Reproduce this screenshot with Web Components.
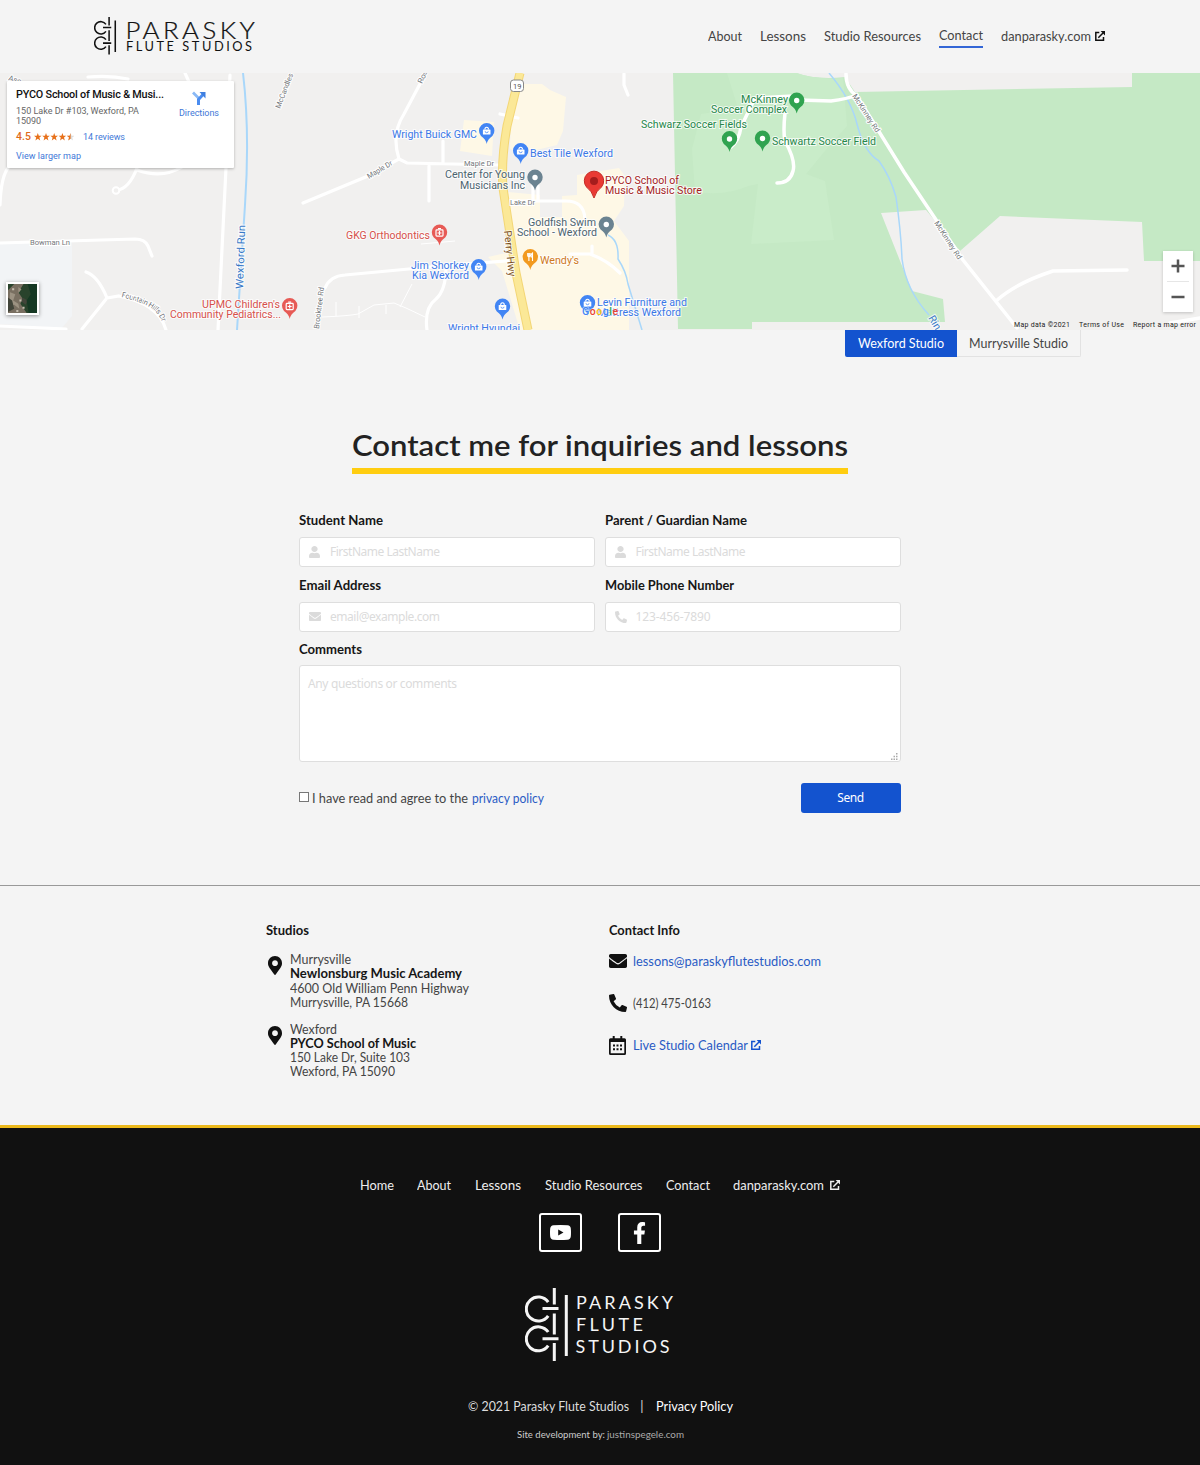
<!DOCTYPE html>
<html lang="en">
<head>
<meta charset="utf-8">
<title>Contact | Parasky Flute Studios</title>
<style>
html,body{margin:0;padding:0}
body{background:#f4f4f4;color:#444;font:400 13px/14px Lato,"Open Sans",sans-serif}
</style>
</head>
<body>
<contact-page></contact-page>
<script>
const define = (name, render, after) => customElements.define(name, class extends HTMLElement {
  connectedCallback() {
    if (this.shadowRoot) return;
    this.attachShadow({mode: 'open'}).innerHTML = render(this);
    if (after) after(this);
  }
});

/* Text run that fills a given measure, by letter spacing or, with "wide", by glyph width. */
define('fit-text', el => `<style>:host{display:inline-block;white-space:nowrap;width:${el.getAttribute('w')}px}span{display:inline-block;white-space:nowrap;transform-origin:0 50%}</style><span><slot></slot></span>`, el => {
  const s = el.shadowRoot.querySelector('span');
  const w = +el.getAttribute('w');
  const natural = s.getBoundingClientRect().width;
  if (el.hasAttribute('wide')) s.style.transform = `scaleX(${w / natural})`;
  else s.style.letterSpacing = (w - natural) / Math.max(el.textContent.trim().length - 1, 1) + 'px';
});

const ICONS = {
  user: ['0 0 448 512', '<path d="M224 256c70.7 0 128-57.3 128-128S294.7 0 224 0 96 57.3 96 128s57.3 128 128 128zm89.6 32h-16.7c-22.2 10.2-46.9 16-72.9 16s-50.6-5.8-72.9-16h-16.7C60.2 288 0 348.2 0 422.4V464c0 26.5 21.5 48 48 48h352c26.5 0 48-21.5 48-48v-41.6c0-74.2-60.2-134.4-134.4-134.4z"/>'],
  mail: ['0 64 512 384', '<path d="M502.3 190.8c3.9-3.1 9.7-.2 9.7 4.7V400c0 26.5-21.5 48-48 48H48c-26.5 0-48-21.5-48-48V195.6c0-5 5.7-7.8 9.7-4.7 22.4 17.4 52.1 39.5 154.1 113.6 21.1 15.4 56.7 47.8 92.2 47.6 35.7.3 72-32.8 92.3-47.6 102-74.1 131.6-96.3 154-113.7zM256 320c23.2.4 56.6-29.2 73.4-41.4 132.7-96.3 142.8-104.7 173.4-128.7 5.8-4.5 9.2-11.5 9.2-18.9v-19c0-26.5-21.5-48-48-48H48c-26.5 0-48 21.5-48 48v19c0 7.4 3.4 14.3 9.2 18.9 30.6 23.9 40.7 32.4 173.4 128.7 16.8 12.2 50.2 41.8 73.4 41.4z"/>'],
  phone: ['0 0 512 512', '<path d="M497.39 361.8l-112-48a24 24 0 0 0-28 6.9l-49.6 60.6A370.66 370.66 0 0 1 130.6 204.11l60.6-49.6a23.94 23.94 0 0 0 6.9-28l-48-112A24.16 24.16 0 0 0 122.6.61l-104 24A24 24 0 0 0 0 48c0 256.5 207.9 464 464 464a24 24 0 0 0 23.4-18.6l24-104a24.29 24.29 0 0 0-14.01-27.6z"/>'],
  marker: ['0 0 384 512', '<path d="M172.268 501.67C26.97 291.031 0 269.413 0 192 0 85.961 85.961 0 192 0s192 85.961 192 192c0 77.413-26.97 99.031-172.268 309.67-9.535 13.774-29.93 13.773-39.464 0zM192 272c44.183 0 80-35.817 80-80s-35.817-80-80-80-80 35.817-80 80 35.817 80 80 80z"/>'],
  calendar: ['0 0 17 19', '<path fill-rule="evenodd" d="M1.500 2.300h2.200V0h2v2.300h5.600V0h2v2.300h2.200A1.500 1.500 0 0 1 17 3.800V17.500a1.500 1.500 0 0 1-1.500 1.500h-14A1.500 1.500 0 0 1 0 17.500V3.800a1.500 1.500 0 0 1 1.500-1.500zM1.700 6v11.300h13.600V6zM4 8.500h2v2H4zm3.500 0h2v2h-2zm3.500 0h2v2h-2zM4 12.300h2v2H4zm3.500 0h2v2h-2zm3.500 0h2v2h-2z"/>'],
  link: ['0 0 10 10', '<path d="M4.300 1.500H.8v7.700h7.700V5.900M3.300 6.700 8 2" fill="none" stroke="currentColor" stroke-width="1.500"/><path d="M5.600 0H10v4.400z"/>'],
  youtube: ['0 0 21 15', '<path fill-rule="evenodd" d="M3.500.3Q10.500-.3 17.500.3 20.600.6 20.800 3.500q.4 4 0 8-.3 2.900-3.300 3.200-7 .6-14 0Q.500 14.400.2 11.500q-.4-4 0-8Q.5.6 3.500.3zM8.200 4.600v5.800l5.300-2.900z"/>'],
  facebook: ['0 0 320 512', '<path d="M279.140 288l14.220-92.660h-88.910v-60.130c0-25.350 12.420-50.060 52.240-50.060h40.420V6.260S260.430 0 225.360 0c-73.220 0-121.080 44.380-121.080 124.720v70.620H22.890V288h81.390v224h100.170V288z"/>']
};
define('ui-icon', el => {
  const [box, body] = ICONS[el.getAttribute('name')];
  return `<style>:host{display:inline-flex;flex:none}svg{display:block;width:${el.getAttribute('w')}px;height:${el.getAttribute('h')}px}</style><svg viewBox="${box}" preserveAspectRatio="none" fill="currentColor">${body}</svg>`;
});

const keys = `<g fill="none" stroke="currentColor" stroke-width="3"><path d="M23.200 14.200a12 12 0 1 0 0 13.600M23.200 44a12 12 0 1 0 0 13.600M17.500 20.500h16M17.500 50.700h16M29.300 0v16.500M29.300 25.500v21M29.300 55v18M41.300 7v61"/></g>`;
define('studio-logo', el => el.hasAttribute('stacked')
  ? `<style>:host{display:block}svg{display:block}text{font-family:Lato;font-size:18px}</style><svg width="150" height="74" viewBox="0 0 150 74" fill="currentColor">${keys}
     <text x="51" y="21" textLength="97">PARASKY</text><text x="51" y="43" textLength="67">FLUTE</text><text x="50.500" y="64.500" textLength="94">STUDIOS</text></svg>`
  : `<style>:host{display:block}svg{display:block}text{font-family:Lato}</style><svg width="162" height="38" viewBox="0 0 162 38" fill="currentColor"><g transform="scale(.515)">${keys}</g>
     <text transform="translate(31.500 21.500) scale(1.120 1)" font-size="23" font-weight="300" stroke="currentColor" stroke-width=".25" textLength="115.500">PARASKY</text><text x="32" y="34" font-size="12.800" textLength="126">FLUTE STUDIOS</text></svg>`);

define('site-nav', () => `<style>
:host{display:block;height:73px}
header{box-sizing:border-box;height:73px;padding:17px 95px 0 94px;display:flex;justify-content:space-between;color:#111}
nav{display:flex;gap:18px;padding-top:12px;height:20px;color:#444}
a{display:block}a.on{height:18px;margin-top:-1px;border-bottom:2px solid #3366d6}
a.ext{display:flex;gap:4px}ui-icon{padding-top:2px;color:#111}
</style><header><studio-logo></studio-logo><nav>
<a><fit-text wide w="34">About</fit-text></a><a><fit-text wide w="46">Lessons</fit-text></a><a><fit-text wide w="97">Studio Resources</fit-text></a><a class="on"><fit-text wide w="44">Contact</fit-text></a><a class="ext"><fit-text wide w="90">danparasky.com</fit-text><ui-icon name="link" w="10" h="10"></ui-icon></a></nav></header>`);

const COLORS = {b:'#3b78e7', r:'#d6504b', s:'#4d6470', g:'#26874a', o:'#cf7a1e', p:'#a51d24'};
const PINS = {b:'#4285f4', r:'#e75a55', s:'#6b8391', g:'#30a350', o:'#f29a1f'};
const glyph = {
  b:'<rect x="-3.800" y="-1.600" width="7.600" height="5.200" rx=".6" fill="#fff"/><path d="M-1.800-1.600a1.800 2.200 0 0 1 3.600 0" fill="none" stroke="#fff" stroke-width="1.100"/><path d="M-1.500.3a1.500 1.400 0 0 0 3 0" fill="none" stroke="#4285f4" stroke-width=".8"/>',
  r:'<rect x="-3.500" y="-2.600" width="7" height="6.200" rx=".8" fill="none" stroke="#fff" stroke-width="1.200"/><path d="M0-1.500v4M-2 .5h4M-1.500-3.800h3" stroke="#fff" stroke-width="1.200"/>',
  s:'<circle r="2.700" fill="#fff"/>', g:'<circle r="2.700" fill="#fff"/>',
  o:'<path d="M-2.600-4v2.500a1.200 1.200 0 0 0 2.400 0V-4M-1.400-4v8M2.200 4v-8q-1.700 1-1.300 4h1.300" fill="none" stroke="#fff" stroke-width="1.100"/>'
};
const pin = (c, x, y) => `<g transform="translate(${x} ${y})"><path d="M0 13Q-1 8-5.700 5A7.700 7.700 0 1 1 5.700 5Q1 8 0 13z" fill="${PINS[c]}"/>${glyph[c]}</g>`;
const lab = (c, x, y, w, t) => `<text class="l" x="${x}" y="${y}" textLength="${w}" lengthAdjust="spacingAndGlyphs" fill="${COLORS[c]}">${t}</text>`;
const road = (x, y, a, w, t) => `<text class="r" transform="translate(${x} ${y}) rotate(${a})" textLength="${w}" lengthAdjust="spacingAndGlyphs">${t}</text>`;

define('studio-map', () => `<style>
:host{display:block;height:257px;position:relative;overflow:hidden;font-family:Roboto,sans-serif}
svg{display:block}
.l{font:10.500px Roboto;paint-order:stroke;stroke:#fff;stroke-opacity:.75;stroke-width:2px}
.r{font:7.500px Roboto;fill:#74777b;paint-order:stroke;stroke:#fff;stroke-width:2px}
.card{position:absolute;left:7px;top:8px;width:227px;height:87px;box-sizing:border-box;padding:8px 15px 0 9px;background:#fff;border-radius:1px;box-shadow:0 1px 3px #0004;display:flex;justify-content:space-between;color:#666;font-size:9px;line-height:10.500px}
.card b{display:block;color:#111;font-weight:500;font-size:10.800px;line-height:12px;height:16.500px}
.rate{display:flex;height:11px;padding-top:5px;color:#e06a1a}.rate svg{margin:1px 9px 0 3px}
.rate strong{font-weight:500;font-size:10.500px}
.blue{color:#3f78d8}.more{padding-top:8px}
.dir{display:flex;flex-direction:column;align-items:center;padding-top:2px;gap:3px}
.zoom{position:absolute;left:1163px;top:178px;width:30px;height:61px;background:#fff;box-shadow:0 1px 3px #0003;display:flex;flex-direction:column}
.sat{position:absolute;left:6px;top:209px;width:29px;height:29px;border:2px solid #fff;box-shadow:0 1px 4px #0006}
.legal{position:absolute;right:4px;bottom:0;display:flex;gap:9px;font-size:7px;line-height:10px;color:#222}
</style>
<svg width="1200" height="257" viewBox="0 73 1200 257">
<path fill="#f1f0ef" d="M0 73h1200v257H0z"/><path fill="#f2f4f6" d="M0 244l72-3v75l-10 12L0 324z"/>
<path fill="#fef8e6" d="M512 84h30l8 6 16 7-3 34-6 14-33 8-14-4zM464 120l30 2-2 34-32-5zM508 192l32 3v22h22v-21l15-1v-20l42-7 6 8-1 30-10 15 15 20v96H522l-20-66-14-14 22-5z"/>
<path fill="#c5e9c5" d="M673 73h123q20 7 49 4l10 15 277-5V73h68v188h-56l-2-39-142-6-40 35-34-41-45 3 31 78 31 8 2 23H752v7h-74z"/>
<path fill="#c9ecc9" d="M727 73h70q18 7 46 5l4 48-18 20-23 28 19 7 9 59-83 4 7-60-10 2q-21 10-53 6l-3-43 9-35 37-6z"/>
<g fill="none" stroke="#a9d7fa"><path d="M243 73q7 60 2 132l-8 125" stroke-width="2"/><path d="M829 73q22 26 28 51 7 28 22 37 11 15 17 36 5 35 6 62 4 31 27 56M608 235q11 5 10 24 8 12 10 25l14 46" stroke-width="1.500"/></g>
<g fill="none" stroke="#fff" stroke-width="3.200" stroke-linecap="round">
<path d="M0 205q1-28 8-37M88 77q22-2 40 2M185 73l4 9M230 75l-4 93-8 162M137 168q-8 21-20 22M137 170q25 9 45-3M0 243l135-4q10 0 13 7l4 10M86 272q12 4 21 26l12-2q40 8 47 34M107 298l-25 31M0 326l66 3M303 203l65-27 31-17q-8-25 5-45l17-32M399 159l8 4 92 2M443 141v22M429 166v35M510 201h56q18 0 19 18M533 201v-17M538 201v-15M500 114l18 4M325 288q5-12 20-13l85-8 87-7M446 267q0 23-10 32-12 9-9 31M570 254h20q17 6 30 19M592 254v-8M624 74v11l4 10"/>
<path d="M846 74q0 15 11 22l47 76 59 88 54 68M996 301q20-18 57-30l74-1M799 100l32 1q16-2 26-6M793 96l-38 2-14 29q-2 14-10 20M785 113q-2 19 0 28 11 20 8 30-3 12-16 12M1170 323l30-5" stroke-width="3.500"/>
</g><circle cx="116" cy="190.500" r="3.300" fill="#f1f0ef" stroke="#fff" stroke-width="2"/>
<path d="M322 317q26-1 36-3l16-9 20-2 12 5 19 9M336 302v14M359 306v12M386 305v9M400 307l12-23M421 244l34-3" fill="none" stroke="#fff"/>
<path d="M520 73l-13 53q-6 34-4 62l13 85 12 57" fill="none" stroke="#f3d675" stroke-width="9"/><path d="M520 73l-13 53q-6 34-4 62l13 85 12 57" fill="none" stroke="#fbe897" stroke-width="7"/>
<rect x="510.500" y="80" width="13" height="11.500" rx="3" fill="#fff" stroke="#888"/><text x="513" y="89" font-size="7.500" fill="#555">19</text>
${road(8,80,18,13,'Ase')}${road(280,109,-69,37,'McCandles')}${road(422,84,-65,14,'Ros')}${road(369,179,-31,28,'Maple Dr')}${road(464,166,0,30,'Maple Dr')}${road(510,205,0,25,'Lake Dr')}${road(30,245,0,40,'Bowman Ln')}${road(319,329,-83,42,'Brooktree Rd')}${road(852,96,57,44,'McKinney Rd')}${road(934,223,57,44,'McKinney Rd')}
<path id="fh" d="M121 297q26 6 35 15 7 8 8 20" fill="none"/><text class="r"><textPath href="#fh" textLength="50">Fountain Hills Dr</textPath></text>
<text class="l" transform="translate(243 289) rotate(-88)" fill="#3979c7" textLength="64" lengthAdjust="spacingAndGlyphs">Wexford Run</text>
<text class="l" transform="translate(928 318) rotate(59)" fill="#3979c7">Rin</text>
<text class="l" transform="translate(504 231) rotate(84)" fill="#7a4d20" textLength="46" lengthAdjust="spacingAndGlyphs">Perry Hwy</text>
${pin('b',486.700,131)}${pin('b',520.700,151)}${pin('s',535,177.500)}${pin('s',606.300,224.500)}${pin('r',439.500,232.500)}${pin('b',478.700,267)}${pin('o',530.300,257)}${pin('b',502.500,306.500)}${pin('b',587.500,303)}${pin('r',289.700,306)}${pin('g',796.700,100.500)}${pin('g',729.500,139)}${pin('g',762.500,138.500)}
<path d="M594 198Q592 191 586.500 187A9.700 9.700 0 1 1 601.500 187Q596 191 594 198z" fill="#e93a34" stroke="#c52b25"/><circle cx="594" cy="181" r="4" fill="#a51d1d"/>
${lab('b',392,137.500,85,'Wright Buick GMC')}${lab('b',530,157,83,'Best Tile Wexford')}${lab('s',445,178,80,'Center for Young')}${lab('s',460,188.500,65,'Musicians Inc')}${lab('p',605,183.500,74,'PYCO School of')}${lab('p',605,194,97,'Music &amp; Music Store')}${lab('s',528,225.500,68,'Goldfish Swim')}${lab('s',517,236,80,'School - Wexford')}${lab('r',346,239,84,'GKG Orthodontics')}${lab('b',411,268.500,58,'Jim Shorkey')}${lab('b',412,279,57,'Kia Wexford')}${lab('o',540,264,39,"Wendy's")}${lab('b',448,331.500,72,'Wright Hyundai')}${lab('b',597,305.500,90,'Levin Furniture and')}${lab('b',597,316,84,'Mattress Wexford')}${lab('r',202,307.500,78,"UPMC Children's")}${lab('r',170,318,111,'Community Pediatrics...')}${lab('g',741,102.500,47,'McKinney')}${lab('g',711,113,76,'Soccer Complex')}${lab('g',641,128,106,'Schwarz Soccer Fields')}${lab('g',772,145,104,'Schwartz Soccer Field')}
<text x="582" y="314.500" font-size="10.500" font-weight="500" textLength="36" style="paint-order:stroke;stroke:#fff;stroke-opacity:.6;stroke-width:1.500px"><tspan fill="#4285f4">G</tspan><tspan fill="#ea4335">o</tspan><tspan fill="#fbbc05">o</tspan><tspan fill="#4285f4">g</tspan><tspan fill="#34a853">l</tspan><tspan fill="#ea4335">e</tspan></text>
</svg>
<div class="card"><div><b><fit-text w="148">PYCO School of Music &amp; Musi...</fit-text></b><div><fit-text w="123">150 Lake Dr #103, Wexford, PA</fit-text></div><div><fit-text w="25">15090</fit-text></div>
<div class="rate"><strong><fit-text w="15">4.5</fit-text></strong><svg width="40" height="8" viewBox="0 0 40 8" fill="#e7711b"><defs><path id="st" d="M3.800 0l1 2.700 2.800.1-2.200 1.800.8 2.800-2.400-1.600-2.400 1.600.8-2.800L0 2.800l2.800-.1z"/></defs><use href="#st"/><use href="#st" x="8.200"/><use href="#st" x="16.400"/><use href="#st" x="24.600"/><use href="#st" x="32.800" fill="#ddd"/><path d="M36.600 0v5.800l-2.400 1.600.8-2.800-2.200-1.800 2.800-.1z"/></svg><span class="blue"><fit-text w="42">14 reviews</fit-text></span></div>
<div class="blue more"><fit-text w="65">View larger map</fit-text></div></div>
<div class="dir blue"><svg width="14" height="14" viewBox="0 0 14 14"><path d="M1 1.500l5.500 5.500v7" fill="none" stroke="#8ab9f5" stroke-width="2.800"/><path d="M6.500 14V8.500L11.500 3" fill="none" stroke="#4a8cf0" stroke-width="3"/><path d="M7.500 1H13.500v6.500z" fill="#3f7fe0"/></svg><fit-text w="40">Directions</fit-text></div></div>
<div class="sat"><svg width="29" height="29" viewBox="0 0 28 28"><path fill="#29432c" d="M0 0h28v28H0z"/><path fill="#796f61" d="M0 6l6-6h9l-5 8 4 6-2 5 6 9H0z"/><path fill="#9c9282" d="M2 8l5 2-2 6 5 3 1 5-5-4-5 2zM10 3l3 2-3 4z"/><path fill="#42453a" d="M0 13l4 3 2 8-6 3zM14 13l5 3-2 4-4-3z"/><path fill="#153823" d="M19 0h9v28h-8l-2-12 4-6z"/><path fill="#c5beb0" d="M4 4h2v2H4zM11 15h2v2h-2zM14 22h2v2h-2zM8 25h2v2H8z"/></svg></div>
<div class="zoom"><svg width="30" height="61"><path d="M8.500 15h13M15 8.500v13M8.500 46h13" stroke="#555" stroke-width="2.500"/><path d="M4 30.500h22" stroke="#e6e6e6"/></svg></div>
<div class="legal"><fit-text w="56">Map data ©2021</fit-text><fit-text w="45">Terms of Use</fit-text><fit-text w="63">Report a map error</fit-text></div>`);

define('studio-tabs', () => `<style>:host{display:flex;justify-content:flex-end;height:27px;padding-right:119px;line-height:26px}
div{box-sizing:border-box;height:27px}.on{width:112px;padding-left:13px;background:#1353cf;color:#fff;border-radius:0 0 0 2px}.off{width:124px;padding-left:12px;border:solid #e2e2e2;border-width:0 1px 1px 0;border-radius:0 0 2px 0}
</style><div class="on"><fit-text wide w="86">Wexford Studio</fit-text></div><div class="off"><fit-text wide w="99">Murrysville Studio</fit-text></div>`);

define('form-field', el => `<style>:host{display:block;width:296px}
label{display:block;height:24px;font-weight:700;color:#161616}
.box{box-sizing:border-box;height:30px;border:1px solid #dedede;border-radius:3px;background:#fff;display:flex;align-items:center;color:#dbdbdb;padding-left:9px;font:12px/28px "Noto Sans","Open Sans",sans-serif}
ui-icon{width:21px}
</style><label><fit-text wide w="${el.getAttribute('lw')}">${el.getAttribute('label')}</fit-text></label><div class="box"><ui-icon name="${el.getAttribute('icon')}" w="${el.getAttribute('iw')}" h="${el.getAttribute('ih')}"></ui-icon><slot></slot></div>`);

define('contact-form', () => `<style>
:host{display:block;padding-top:73px;height:455px}
h1{margin:0 auto;width:496px;height:38px;border-bottom:6px solid #ffcd10;font-size:29px;font-weight:600;line-height:30px;color:#222}
form{width:602px;margin:39px auto 0 299px}
.grid{display:grid;grid-template-columns:296px 296px;gap:10.500px 9.500px}
.c{display:block;height:23px;margin-top:10.500px;font-weight:700;color:#161616}
.area{box-sizing:border-box;height:97px;border:1px solid #dedede;border-radius:3px;background:#fff;color:#dbdbdb;padding:9px 8px;font:12px/17px "Noto Sans","Open Sans",sans-serif;display:flex;justify-content:space-between;margin-bottom:21px}
.area svg{align-self:flex-end;margin:0 -6px -8px 0}
.row{display:flex;justify-content:space-between}
.agree{display:flex;padding-top:8px}.agree i{box-sizing:border-box;width:10px;height:10px;border:1px solid #777;background:#fff;margin:1px 3px 0 0}
.agree a{color:#2a5bc4;margin-left:4px}
button{width:100px;height:30px;padding:0;border:0;border-radius:3px;background:#1353cf;color:#fff;font:12px/30px "Noto Sans","Open Sans",sans-serif;margin-right:.500px}
</style><h1><fit-text wide w="496">Contact me for inquiries and lessons</fit-text></h1>
<form><div class="grid">
<form-field label="Student Name" lw="84" icon="user" iw="11" ih="12"><fit-text w="110">FirstName LastName</fit-text></form-field>
<form-field label="Parent / Guardian Name" lw="142" icon="user" iw="11" ih="12"><fit-text w="110">FirstName LastName</fit-text></form-field>
<form-field label="Email Address" lw="82" icon="mail" iw="12" ih="9"><fit-text w="110">email@example.com</fit-text></form-field>
<form-field label="Mobile Phone Number" lw="129" icon="phone" iw="12" ih="12"><fit-text w="75">123-456-7890</fit-text></form-field></div>
<label class="c"><fit-text wide w="63">Comments</fit-text></label>
<div class="area"><fit-text w="149">Any questions or comments</fit-text><svg width="7" height="7" fill="#aaa"><path d="M5 0h1.500v1.500H5zM5 2.700h1.500v1.500H5zM2.500 2.700H4v1.500H2.500zM5 5.400h1.500v1.500H5zM2.500 5.400H4v1.500H2.500zM0 5.400h1.500v1.500H0z"/></svg></div>
<div class="row"><div class="agree"><i></i><fit-text wide w="156">I have read and agree to the</fit-text><a><fit-text wide w="72">privacy policy</fit-text></a></div><button type="button"><fit-text w="27">Send</fit-text></button></div></form>`);

define('studio-details', () => `<style>
:host{display:flex;box-sizing:border-box;height:240px;border-top:1px solid #999;padding:37px 0 0 266px}
section{width:343px}h2{margin:0;font-size:13px;line-height:14px;height:29px;color:#161616}
address{font-style:normal;display:flex;line-height:14.330px;height:57px;margin-bottom:12.500px}
address ui-icon{width:22px;padding:4px 0 0 2px;color:#111}address div div{height:14.330px}b{color:#161616}
.line{display:flex;height:42px}.line>ui-icon{width:24px;height:18px;align-items:center;color:#111}.line>span,.line>a{display:flex;padding-top:2px}
a{color:#2a5bc4}a ui-icon{padding:2px 0 0 3px;color:#1353cf}
</style><section><h2><fit-text wide w="43">Studios</fit-text></h2>
<address><ui-icon name="marker" w="14" h="19"></ui-icon><div><div><fit-text wide w="61">Murrysville</fit-text></div><div><b><fit-text wide w="172">Newlonsburg Music Academy</fit-text></b></div><div><fit-text wide w="179">4600 Old William Penn Highway</fit-text></div><div><fit-text wide w="118">Murrysville, PA 15668</fit-text></div></div></address>
<address><ui-icon name="marker" w="14" h="19"></ui-icon><div><div><fit-text wide w="47">Wexford</fit-text></div><div><b><fit-text wide w="126">PYCO School of Music</fit-text></b></div><div><fit-text wide w="120">150 Lake Dr, Suite 103</fit-text></div><div><fit-text wide w="105">Wexford, PA 15090</fit-text></div></div></address></section>
<section><h2><fit-text wide w="71">Contact Info</fit-text></h2>
<div class="line"><ui-icon name="mail" w="18" h="14"></ui-icon><a><fit-text wide w="188">lessons@paraskyflutestudios.com</fit-text></a></div>
<div class="line"><ui-icon name="phone" w="18" h="18"></ui-icon><span><fit-text wide w="78">(412) 475-0163</fit-text></span></div>
<div class="line"><ui-icon name="calendar" w="17" h="19"></ui-icon><a><fit-text wide w="115">Live Studio Calendar</fit-text><ui-icon name="link" w="10" h="10"></ui-icon></a></div></section>`);

define('site-footer', () => `<style>
:host{display:flex;flex-direction:column;align-items:center;box-sizing:border-box;height:340px;border-top:3px solid #ecb91c;background:#111;color:#eee;padding-top:50px}
nav{display:flex;gap:23.700px;height:35px}a{display:flex;gap:6px}a ui-icon{padding-top:2px}
.soc{display:flex;gap:36px;height:75px}.soc div{box-sizing:border-box;width:43px;height:39px;border:2px solid #fff;border-radius:3px;display:flex;align-items:center;justify-content:center;color:#fff}
studio-logo{height:111px;color:#f5f5f5;margin-left:-1px}.copy{display:flex;height:30px;color:#ddd}.copy i{font-style:normal;width:27px;text-align:center}.copy a{color:#fff}
small{font-size:9px;line-height:12px;color:#ccc;display:flex;gap:2px}small span{color:#aaa}
</style><nav><a><fit-text wide w="34">Home</fit-text></a><a><fit-text wide w="34">About</fit-text></a><a><fit-text wide w="46">Lessons</fit-text></a><a><fit-text wide w="97.500">Studio Resources</fit-text></a><a><fit-text wide w="44">Contact</fit-text></a><a><fit-text wide w="91">danparasky.com</fit-text><ui-icon name="link" w="10" h="10"></ui-icon></a></nav>
<div class="soc"><div><ui-icon name="youtube" w="21" h="15"></ui-icon></div><div><ui-icon name="facebook" w="13" h="22"></ui-icon></div></div>
<studio-logo stacked></studio-logo>
<div class="copy"><fit-text wide w="161">© 2021 Parasky Flute Studios</fit-text><i>|</i><a><fit-text wide w="77">Privacy Policy</fit-text></a></div>
<small><fit-text wide w="88">Site development by:</fit-text><span><fit-text wide w="77">justinspegele.com</fit-text></span></small>`);

define('contact-page', () => `<style>:host{display:block;width:1200px;height:1465px;overflow:hidden}</style><site-nav></site-nav><studio-map></studio-map><studio-tabs></studio-tabs><contact-form></contact-form><studio-details></studio-details><site-footer></site-footer>`);
</script>
</body>
</html>
